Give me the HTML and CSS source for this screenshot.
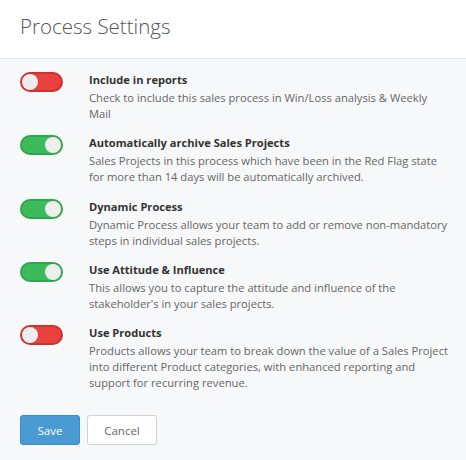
FILE: index.html
```html
<!DOCTYPE html>
<html lang="en">
<head>
    <meta charset="UTF-8">
    <meta name="viewport" content="width=device-width, initial-scale=1.0">
    <title>Process Settings</title>
    <link rel="stylesheet" href="styles.css">
</head>
<body>
    <div class="header">
        <h1>Process Settings</h1>
    </div>

    <div class="content">
        <div class="setting">
            <span class="toggle off"><span class="knob"></span></span>
            <div class="info">
                <h3>Include in reports</h3>
                <p>Check to include this sales process in Win/Loss analysis &amp; Weekly Mail</p>
            </div>
        </div>
        <div class="setting">
            <span class="toggle on"><span class="knob"></span></span>
            <div class="info">
                <h3>Automatically archive Sales Projects</h3>
                <p>Sales Projects in this process which have been in the Red Flag state for more than 14 days will be automatically archived.</p>
            </div>
        </div>
        <div class="setting">
            <span class="toggle on"><span class="knob"></span></span>
            <div class="info">
                <h3>Dynamic Process</h3>
                <p>Dynamic Process allows your team to add or remove non-mandatory steps in individual sales projects.</p>
            </div>
        </div>
        <div class="setting">
            <span class="toggle on"><span class="knob"></span></span>
            <div class="info">
                <h3>Use Attitude &amp; Influence</h3>
                <p>This allows you to capture the attitude and influence of the stakeholder's in your sales projects.</p>
            </div>
        </div>
        <div class="setting">
            <span class="toggle off"><span class="knob"></span></span>
            <div class="info">
                <h3>Use Products</h3>
                <p>Products allows your team to break down the value of a Sales Project into different Product categories, with enhanced reporting and support for recurring revenue.</p>
            </div>
        </div>

        <div class="buttons">
            <button class="save">Save</button>
            <button class="cancel">Cancel</button>
        </div>
    </div>
</body>
</html>
```

FILE: styles.css
```css
body {
    font-family: "Open Sans", Arial, sans-serif;
    margin: 0;
    padding: 0;
    background-color: #f7f8fa;
    color: #666;
}
.header {
    background-color: #fff;
    height: 58px;
    border-bottom: 1px solid #e4e6e9;
    padding: 0 20px;
    display: flex;
    align-items: center;
}
.header h1 {
    margin: 0;
    font-size: 20.5px;
    font-weight: 300;
    color: #555;
    margin-top: -6px;
}
.content {
    padding: 11px 15px 0 20px;
}
.setting {
    display: flex;
    gap: 26px;
    margin-bottom: 11.3px;
}
.toggle {
    flex: none;
    width: 39px;
    height: 16px;
    border-radius: 12px;
    border: 2px solid;
    margin-top: 2px;
    display: flex;
    align-items: center;
}
.toggle.off {
    background-color: #e8413e;
    border-color: #c93431;
    justify-content: flex-start;
}
.toggle.on {
    background-color: #3dbb5c;
    border-color: #2ea64c;
    justify-content: flex-end;
}
.knob {
    width: 16px;
    height: 16px;
    border-radius: 50%;
    background-color: #eeeeee;
}
.info h3 {
    margin: 0;
    font-size: 11.1px;
    font-weight: 700;
    line-height: 20px;
    color: #333;
}
.info p {
    margin: 0;
    font-size: 11.2px;
    line-height: 16px;
    color: #666;
}
.buttons {
    display: flex;
    gap: 7px;
    margin-top: 24px;
}
.buttons button {
    font-family: "Open Sans", Arial, sans-serif;
    font-size: 11.5px;
    height: 30px;
    border-radius: 3px;
    cursor: pointer;
}
.save {
    width: 60px;
    background-color: #4a9ad4;
    border: 1px solid #3f8cc4;
    color: white;
}
.cancel {
    width: 70px;
    background-color: #fff;
    border: 1px solid #d0d3d6;
    color: #666;
}
```
